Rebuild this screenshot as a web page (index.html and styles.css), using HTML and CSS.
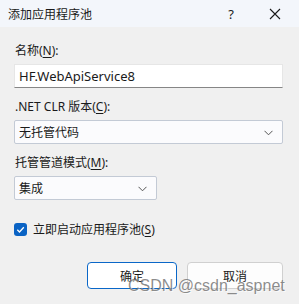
FILE: index.html
```html
<!DOCTYPE html>
<html lang="zh-CN">
<head>
    <meta charset="UTF-8">
    <title>添加应用程序池</title>
    <link rel="stylesheet" href="styles.css">
</head>
<body>

<div class="dialog">
    <div class="titlebar">
        <span class="title">添加应用程序池</span>
        <span class="help">?</span>
        <svg class="close" width="12" height="12" viewBox="0 0 12 12">
            <path d="M1 1 L11 11 M11 1 L1 11" stroke="#1a1a1a" stroke-width="1.1" fill="none"/>
        </svg>
    </div>

    <div class="content">
        <label class="lbl first">名称(<u>N</u>):</label>
        <div class="textbox">HF.WebApiService8</div>

        <label class="lbl">.NET CLR 版本(<u>C</u>):</label>
        <div class="select wide">
            <span>无托管代码</span>
            <svg class="arrow" width="9" height="6" viewBox="0 0 9 6"><path d="M0.5 0.8 L4.5 4.8 L8.5 0.8" stroke="#555" stroke-width="1" fill="none"/></svg>
        </div>

        <label class="lbl">托管管道模式(<u>M</u>):</label>
        <div class="select narrow">
            <span>集成</span>
            <svg class="arrow" width="9" height="6" viewBox="0 0 9 6"><path d="M0.5 0.8 L4.5 4.8 L8.5 0.8" stroke="#555" stroke-width="1" fill="none"/></svg>
        </div>

        <div class="check-row">
            <span class="checkbox">
                <svg width="13" height="13" viewBox="0 0 13 13"><path d="M3.3 6.8 L5.5 9 L9.8 4.3" stroke="#fff" stroke-width="1.3" fill="none"/></svg>
            </span>
            <span>立即启动应用程序池(<u>S</u>)</span>
        </div>

        <div class="buttons">
            <button class="btn ok">确定</button>
            <button class="btn">取消</button>
        </div>
    </div>

    <div class="watermark">CSDN @csdn_aspnet</div>
</div>

</body>
</html>
```

FILE: styles.css
```css
body {
    margin: 0;
    background-color: #f0f0f0;
    font-family: "Noto Sans", "Noto Sans CJK SC", sans-serif;
    font-size: 12px;
    color: #1a1a1a;
}
.dialog {
    position: relative;
    width: 299px;
    height: 304px;
}
.titlebar {
    height: 27px;
    background-color: #f3f6fb;
    display: flex;
    align-items: center;
    padding-left: 8px;
}
.title {
    flex: 1;
    font-size: 12px;
}
.help {
    font-size: 13px;
    margin-right: 35px;
}
.close {
    margin-right: 18px;
}
.content {
    padding: 0 16px 0 14px;
    display: flex;
    flex-direction: column;
}
.lbl {
    display: block;
    line-height: 16px;
    height: 16px;
    margin-top: 11px;
    margin-bottom: 5px;
    padding-left: 1px;
}
.lbl.first {
    margin-top: 16px;
}
.lbl u {
    text-underline-offset: 2px;
}
.textbox {
    height: 22px;
    line-height: 22px;
    background-color: #ffffff;
    border: 1px solid #e6e6e6;
    border-bottom: 1px solid #868686;
    padding-left: 4px;
    font-size: 13px;
}
.select {
    height: 22px;
    background-color: #fbfbfd;
    border: 1px solid #c3cad5;
    border-radius: 2px;
    display: flex;
    align-items: center;
    justify-content: space-between;
    padding: 0 9px 0 4px;
    font-size: 12px;
}
.select.narrow {
    width: 128px;
}
.arrow {
    margin-top: 1px;
}
.check-row {
    display: flex;
    align-items: center;
    margin-top: 21px;
    height: 16px;
    font-size: 12px;
}
.checkbox {
    width: 13px;
    height: 13px;
    border-radius: 3px;
    background-color: #0a63c4;
    margin-right: 6px;
    display: flex;
}
.check-row u {
    text-underline-offset: 2px;
}
.buttons {
    display: flex;
    justify-content: flex-end;
    gap: 10px;
    margin-top: 25px;
}
.btn {
    width: 96px;
    height: 27px;
    background-color: #fdfdfd;
    border: 1px solid #d0d0d0;
    border-radius: 4px;
    font-family: "Noto Sans", "Noto Sans CJK SC", sans-serif;
    font-size: 12px;
    color: #1a1a1a;
}
.btn.ok {
    width: 90px;
    background-color: #ffffff;
    border: 1px solid #0a67c8;
}
.watermark {
    position: absolute;
    left: 128px;
    top: 277px;
    font-family: "Liberation Sans", sans-serif;
    font-size: 16px;
    color: rgba(120, 120, 120, 0.85);
    text-shadow: 1px 1px 0 rgba(255, 255, 255, 0.7);
    white-space: nowrap;
}
```
